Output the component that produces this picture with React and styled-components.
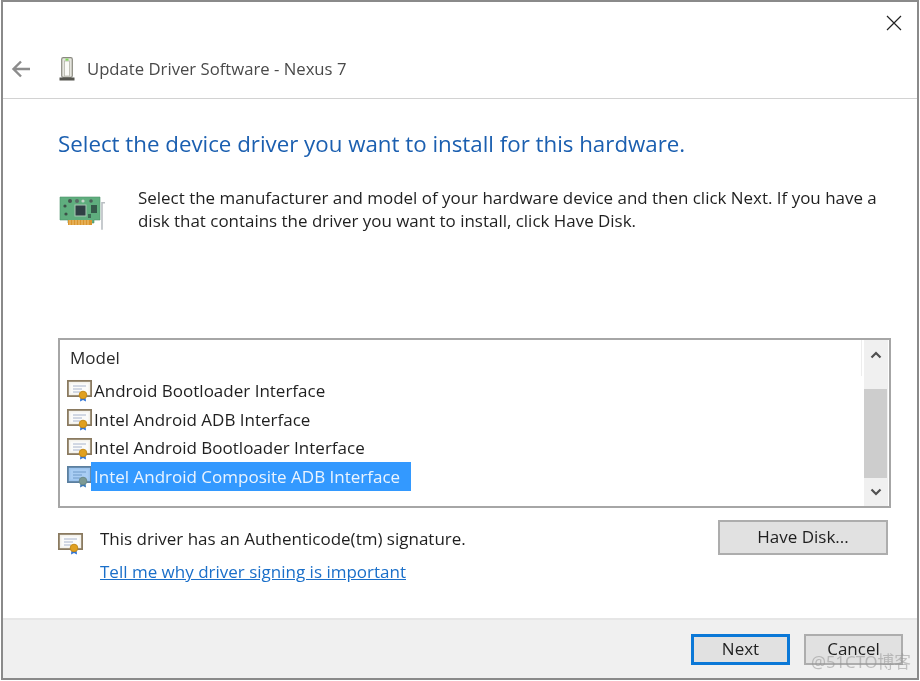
import React from "react";
import styled, { createGlobalStyle } from "styled-components";

const FONT = `"Open Sans", "Noto Sans", "Liberation Sans", sans-serif`;

const GlobalStyle = createGlobalStyle`
  html, body {
    margin: 0;
    padding: 0;
    background: #fff;
  }
  * {
    box-sizing: border-box;
  }
`;

const CertIcon = ({ selected }) => (
  <svg width="26" height="24" viewBox="0 -2 26 24">
    <rect x="0.9" y="0.9" width="23.2" height="15.2" fill={selected ? "#9cc4ee" : "#f4f2ec"} stroke={selected ? "#5b7f9f" : "#8a7a60"} strokeWidth="1.8" />
    <rect x="3.5" y="3.5" width="18" height="10" fill={selected ? "#a9cdf3" : "#fbfbfa"} />
    <path d="M6 6h13M6 9h9M6 12h7" stroke={selected ? "#6f9ac8" : "#a8b4cc"} strokeWidth="1" />
    <path d="M13.5 17l-.5 4.5 3-1.5 3 1.5-.5-4.5z" fill={selected ? "#3b79b8" : "#2f74d8"} />
    <circle cx="16" cy="15" r="3.8" fill={selected ? "#7d9a94" : "#e0a020"} stroke={selected ? "#6b8a88" : "#c48a18"} />
  </svg>
);

const CardIcon = () => (
  <svg width="48" height="36" viewBox="0 0 48 36">
    <path d="M47 6.8h-3v27" stroke="#b9bec2" strokeWidth="1.6" fill="none" />
    <path d="M2 1h40v23h-6v3H10v-3H2z" fill="#5fae7e" stroke="#4b9168" strokeWidth="0.6" />
    <rect x="10" y="24" width="24" height="5" fill="#d9962f" />
    <path d="M12 24v5M15 24v5M18 24v5M21 24v5M24 24v5M27 24v5M30 24v5" stroke="#f0c57a" strokeWidth="1" />
    <rect x="17" y="9" width="11" height="11" fill="#2f3f44" stroke="#a9c7b4" />
    <rect x="33" y="9" width="6" height="8" fill="#35594a" />
    <circle cx="12" cy="5" r="2" fill="#44554f" />
    <circle cx="19" cy="5" r="2" fill="#5a6a66" />
    <circle cx="25" cy="5" r="1.6" fill="#c3d4c8" />
    <circle cx="33" cy="5" r="1.8" fill="#4a5f58" />
    <circle cx="7" cy="10" r="1.6" fill="#3c5048" />
    <circle cx="8" cy="18" r="1.6" fill="#3c5048" />
    <rect x="30" y="18" width="3" height="4" fill="#3d6c55" />
  </svg>
);

const DeviceIcon = () => (
  <svg width="16" height="24" viewBox="0 0 16 24">
    <rect x="2.7" y="0.7" width="10.6" height="19.6" rx="1.5" fill="#e6e6df" stroke="#8a8a80" strokeWidth="1.2" />
    <rect x="5.5" y="4" width="5" height="15" fill="#fafaf6" stroke="#b5b5aa" strokeWidth="0.8" />
    <rect x="6.5" y="1.6" width="3" height="2" fill="#7ed957" />
    <rect x="0.5" y="20.5" width="15" height="3" fill="#55554f" />
  </svg>
);

const Chevron = ({ up }) => (
  <svg width="12" height="8" viewBox="0 0 12 8">
    <path d={up ? "M1.5 6.5L6 2l4.5 4.5" : "M1.5 1.5L6 6l4.5-4.5"} fill="none" stroke="#505050" strokeWidth="2.2" />
  </svg>
);

const Window = styled.div`
  position: relative;
  width: 918px;
  height: 680px;
  margin-left: 1px;
  border: 2px solid #8a8a8a;
  background: #fff;
  display: flex;
  flex-direction: column;
  font-family: ${FONT};
  font-size: 17px;
  color: #1a1a1a;
  overflow: hidden;
  filter: blur(0.3px);
`;

const Header = styled.header`
  height: 97px;
  border-bottom: 1px solid #d2d2d2;
  flex: none;
  display: flex;
  flex-direction: column;
`;

const TitleBar = styled.div`
  display: flex;
  justify-content: flex-end;
  height: 50px;
  padding: 12px 14px 0 0;
`;

const CloseButton = styled.button`
  width: 18px;
  height: 18px;
  border: none;
  background: none;
  padding: 0;
  cursor: pointer;
  display: flex;
`;

const NavRow = styled.div`
  display: flex;
  align-items: center;
  height: 34px;
  padding-left: 8px;
`;

const BackButton = styled.button`
  width: 20px;
  height: 20px;
  border: none;
  background: none;
  padding: 0;
  margin-right: 28px;
  display: flex;
  cursor: pointer;
`;

const NavTitle = styled.span`
  margin-left: 12px;
  padding-bottom: 2px;
  font-size: 16.7px;
  color: #4a4a4a;
`;

const Content = styled.main`
  flex: 1;
  display: flex;
  flex-direction: column;
  padding: 27px 26px 0 55px;
`;

const Heading = styled.h1`
  margin: 0;
  font-size: 22.3px;
  line-height: 36px;
  font-weight: 400;
  color: #1b5fb0;
  white-space: nowrap;
`;

const IntroRow = styled.div`
  display: flex;
  align-items: flex-start;
  margin-top: 24px;
  height: 152px;
`;

const IntroIcon = styled.div`
  width: 80px;
  flex: none;
  padding-top: 10px;
  display: flex;
`;

const IntroText = styled.p`
  margin: 0;
  font-size: 16.95px;
  line-height: 23px;
  color: #1f1f1f;
`;

const ListBox = styled.div`
  height: 170px;
  border: 2px solid #a6a6a6;
  display: flex;
  flex: none;
`;

const ListMain = styled.div`
  flex: 1;
  display: flex;
  flex-direction: column;
  min-width: 0;
`;

const ColumnHeader = styled.div`
  height: 36px;
  padding: 0 0 2px 10px;
  border-right: 1px solid #ededed;
  margin-right: 2px;
  display: flex;
  align-items: center;
  font-size: 17px;
  color: #2b2b2b;
`;

const Row = styled.div`
  height: 28.7px;
  display: flex;
  align-items: center;
  padding-left: 7px;
`;

const RowLabel = styled.span`
  margin-left: ${(p) => (p.$selected ? "-2px" : "1px")};
  padding: 0 ${(p) => (p.$selected ? "11px" : "0")} 0 ${(p) => (p.$selected ? "3px" : "0")};
  height: 29px;
  line-height: 29px;
  font-size: 17px;
  background: ${(p) => (p.$selected ? "#3399ff" : "transparent")};
  color: ${(p) => (p.$selected ? "#eaf4ff" : "#1f1f1f")};
  white-space: nowrap;
`;

const Scrollbar = styled.div`
  width: 24px;
  margin-right: 1px;
  background: #f0f0f0;
  display: flex;
  flex-direction: column;
  flex: none;
`;

const ScrollArrow = styled.div`
  height: ${(p) => p.$height}px;
  display: flex;
  align-items: center;
  justify-content: center;
  flex: none;
`;

const ScrollTrack = styled.div`
  flex: 1;
  padding: 19px 1px 0 0;
  display: flex;
`;

const ScrollThumb = styled.div`
  flex: 1;
  background: #cdcdcd;
`;

const SignRow = styled.div`
  display: flex;
  margin-top: 12px;
  justify-content: space-between;
  align-items: flex-start;
`;

const SignInfo = styled.div`
  display: flex;
`;

const SignIcon = styled.div`
  width: 42px;
  flex: none;
  padding-top: 11px;
  display: flex;
`;

const SignText = styled.div`
  display: flex;
  flex-direction: column;
  gap: 11px;
  padding-top: 8px;
`;

const Line = styled.span`
  font-size: 17px;
  line-height: 22px;
  color: #1f1f1f;
`;

const HelpLink = styled.a`
  font-size: 17px;
  line-height: 22px;
  color: #1a6fc9;
  text-decoration: underline;
`;

const Button = styled.button`
  width: ${(p) => p.$width || 99}px;
  height: ${(p) => p.$height || 31}px;
  background: #e1e1e1;
  border: ${(p) => (p.$primary ? "3px solid #0b78d7" : "2px solid #adadad")};
  font-family: ${FONT};
  font-size: 17px;
  color: #1f1f1f;
  padding: 0 0 2px;
  cursor: pointer;
`;

const HaveDisk = styled(Button)`
  margin-right: 3px;
`;

const Footer = styled.footer`
  flex: none;
  height: 60px;
  background: #f0f0f0;
  border-top: 2px solid #e6e6e6;
  display: flex;
  justify-content: flex-end;
  align-items: flex-start;
  gap: 14px;
  padding: 14px 14px 0 0;
`;

const Watermark = styled.span`
  position: absolute;
  right: 6px;
  bottom: 5px;
  font-family: "Noto Sans", "Noto Sans CJK SC", sans-serif;
  font-size: 16.7px;
  color: rgba(150, 150, 150, 0.55);
  pointer-events: none;
`;

const models = [
  "Android Bootloader Interface",
  "Intel Android ADB Interface",
  "Intel Android Bootloader Interface",
  "Intel Android Composite ADB Interface",
];

export default function App() {
  return (
    <>
      <GlobalStyle />
      <Window>
        <Header>
          <TitleBar>
            <CloseButton aria-label="Close">
              <svg width="18" height="18" viewBox="0 0 18 18">
                <path d="M2 2l14 14M16 2L2 16" stroke="#222" strokeWidth="1.2" fill="none" />
              </svg>
            </CloseButton>
          </TitleBar>
          <NavRow>
            <BackButton aria-label="Back">
              <svg width="20" height="20" viewBox="0 0 20 20">
                <path d="M19 10H2M10 2.5L2.5 10l7.5 7.5" stroke="#8c8c8c" strokeWidth="2.4" fill="none" />
              </svg>
            </BackButton>
            <DeviceIcon />
            <NavTitle>Update Driver Software - Nexus 7</NavTitle>
          </NavRow>
        </Header>
        <Content>
          <Heading>Select the device driver you want to install for this hardware.</Heading>
          <IntroRow>
            <IntroIcon>
              <CardIcon />
            </IntroIcon>
            <IntroText>
              Select the manufacturer and model of your hardware device and then click Next. If you have a disk that contains the driver you want to install, click Have Disk.
            </IntroText>
          </IntroRow>
          <ListBox>
            <ListMain>
              <ColumnHeader>Model</ColumnHeader>
              {models.map((name, i) => (
                <Row key={name}>
                  <CertIcon selected={i === 3} />
                  <RowLabel $selected={i === 3}>{name}</RowLabel>
                </Row>
              ))}
            </ListMain>
            <Scrollbar>
              <ScrollArrow $height={30}>
                <Chevron up />
              </ScrollArrow>
              <ScrollTrack>
                <ScrollThumb />
              </ScrollTrack>
              <ScrollArrow $height={28}>
                <Chevron />
              </ScrollArrow>
            </Scrollbar>
          </ListBox>
          <SignRow>
            <SignInfo>
              <SignIcon>
                <CertIcon />
              </SignIcon>
              <SignText>
                <Line>This driver has an Authenticode(tm) signature.</Line>
                <HelpLink href="#">Tell me why driver signing is important</HelpLink>
              </SignText>
            </SignInfo>
            <HaveDisk $width={170} $height={35}>Have Disk...</HaveDisk>
          </SignRow>
        </Content>
        <Footer>
          <Button $primary>Next</Button>
          <Button>Cancel</Button>
        </Footer>
        <Watermark>@51CTO博客</Watermark>
      </Window>
    </>
  );
}
